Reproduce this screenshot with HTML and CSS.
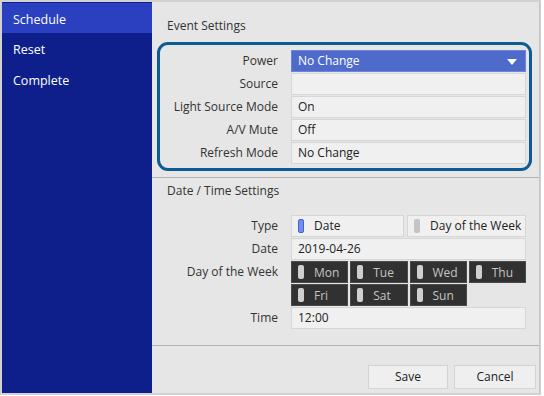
FILE: index.html
```html
<!DOCTYPE html>
<html lang="en">
<head>
    <meta charset="UTF-8">
    <meta name="viewport" content="width=device-width, initial-scale=1.0">
    <title>Schedule</title>
    <link rel="stylesheet" href="styles.css">
</head>
<body>
    <div class="frame">
        <div class="sidebar">
            <div class="nav active">Schedule</div>
            <div class="nav">Reset</div>
            <div class="nav">Complete</div>
        </div>
        <div class="main">
            <div class="section first">
                <div class="title">Event Settings</div>
                <div class="box">
                    <div class="form">
                        <div class="label">Power</div>
                        <div class="field select">No Change<span class="arrow"></span></div>
                        <div class="label">Source</div>
                        <div class="field"></div>
                        <div class="label">Light Source Mode</div>
                        <div class="field">On</div>
                        <div class="label">A/V Mute</div>
                        <div class="field">Off</div>
                        <div class="label">Refresh Mode</div>
                        <div class="field">No Change</div>
                    </div>
                </div>
            </div>
            <div class="section second">
                <div class="title">Date / Time Settings</div>
                <div class="form spaced">
                    <div class="label">Type</div>
                    <div class="type">
                        <div class="field"><span class="ind on"></span>Date</div>
                        <div class="field"><span class="ind"></span>Day of the Week</div>
                    </div>
                    <div class="label">Date</div>
                    <div class="field">2019-04-26</div>
                    <div class="label">Day of the Week</div>
                    <div class="days">
                        <div class="day"><span class="ind"></span>Mon</div>
                        <div class="day"><span class="ind"></span>Tue</div>
                        <div class="day"><span class="ind"></span>Wed</div>
                        <div class="day"><span class="ind"></span>Thu</div>
                        <div class="day"><span class="ind"></span>Fri</div>
                        <div class="day"><span class="ind"></span>Sat</div>
                        <div class="day"><span class="ind"></span>Sun</div>
                    </div>
                    <div class="label">Time</div>
                    <div class="field">12:00</div>
                </div>
            </div>
            <div class="footer">
                <div class="btn save">Save</div>
                <div class="btn cancel">Cancel</div>
            </div>
        </div>
    </div>
</body>
</html>
```
FILE: styles.css
```css
* {
    margin: 0;
    padding: 0;
    box-sizing: border-box;
}
body {
    font-family: "Open Sans", "Noto Sans", sans-serif;
    font-size: 12px;
    color: #333;
    background: #fff;
}
.frame {
    display: flex;
    width: 541px;
    height: 395px;
    border: 2px solid #d2d2d2;
    border-right-width: 1px;
}
.sidebar {
    width: 150px;
    background: #0e1f8b;
    padding-top: 1px;
}
.nav {
    height: 31px;
    line-height: 33px;
    padding-left: 11px;
    color: #fff;
    font-size: 12.5px;
}
.nav.active {
    background: #2a40c1;
    height: 30px;
    line-height: 33px;
}
.main {
    flex: 1;
    display: flex;
    flex-direction: column;
    background: #e6e6e6;
    border-right: 1px solid #c4c4c4;
}
.section {
    border-bottom: 1px solid #b4b4b4;
}
.first {
    height: 176px;
    padding-top: 13px;
}
.second {
    height: 168px;
    padding-top: 2px;
}
.title {
    height: 22px;
    line-height: 22px;
    padding-left: 15px;
}
.box {
    margin: 5px 0 0 5px;
    width: 375px;
    height: 129px;
    border: 3px solid #0c5b94;
    border-radius: 11px;
    padding: 5px 3px 0 0;
}
.form {
    display: grid;
    grid-template-columns: 118px 235px;
    column-gap: 13px;
    row-gap: 1px;
}
.spaced {
    margin: 13px 0 0 8px;
}
.label {
    height: 22px;
    line-height: 22px;
    text-align: right;
}
.field {
    height: 22px;
    line-height: 20px;
    padding-left: 6px;
    background: #f0f0f0;
    border: 1px solid #d6d6d6;
    color: #222;
    display: flex;
    align-items: center;
}
.select {
    position: relative;
    background: #4e6bcb;
    border-color: #6d86d6;
    color: #fff;
}
.arrow {
    position: absolute;
    right: 8px;
    top: 8px;
    border-left: 5px solid transparent;
    border-right: 5px solid transparent;
    border-top: 6px solid #fff;
}
.type {
    display: grid;
    grid-template-columns: 113px 1fr;
    column-gap: 3px;
}
.ind {
    display: inline-block;
    width: 6px;
    height: 14px;
    border-radius: 2px;
    background: #c4c4c4;
    margin-right: 10px;
}
.ind.on {
    background: #6f8ff5;
    border: 1px solid #4762c8;
}
.days {
    display: grid;
    grid-template-columns: repeat(4, 1fr);
    column-gap: 2px;
    row-gap: 1px;
}
.day {
    height: 22px;
    display: flex;
    align-items: center;
    padding-left: 6px;
    background: #313131;
    border: 1px solid #4a4a4a;
    color: #c4c4c4;
}
.day .ind {
    background: #cfcfcf;
    margin-right: 10px;
}
.footer {
    flex: 1;
    display: flex;
    justify-content: flex-end;
    align-items: flex-start;
    gap: 6px;
    padding: 19px 3px 0 0;
}
.btn {
    height: 24px;
    line-height: 22px;
    text-align: center;
    background: #efefef;
    border: 1px solid #d4d4d4;
    color: #222;
}
.save {
    width: 80px;
}
.cancel {
    width: 82px;
}
```
